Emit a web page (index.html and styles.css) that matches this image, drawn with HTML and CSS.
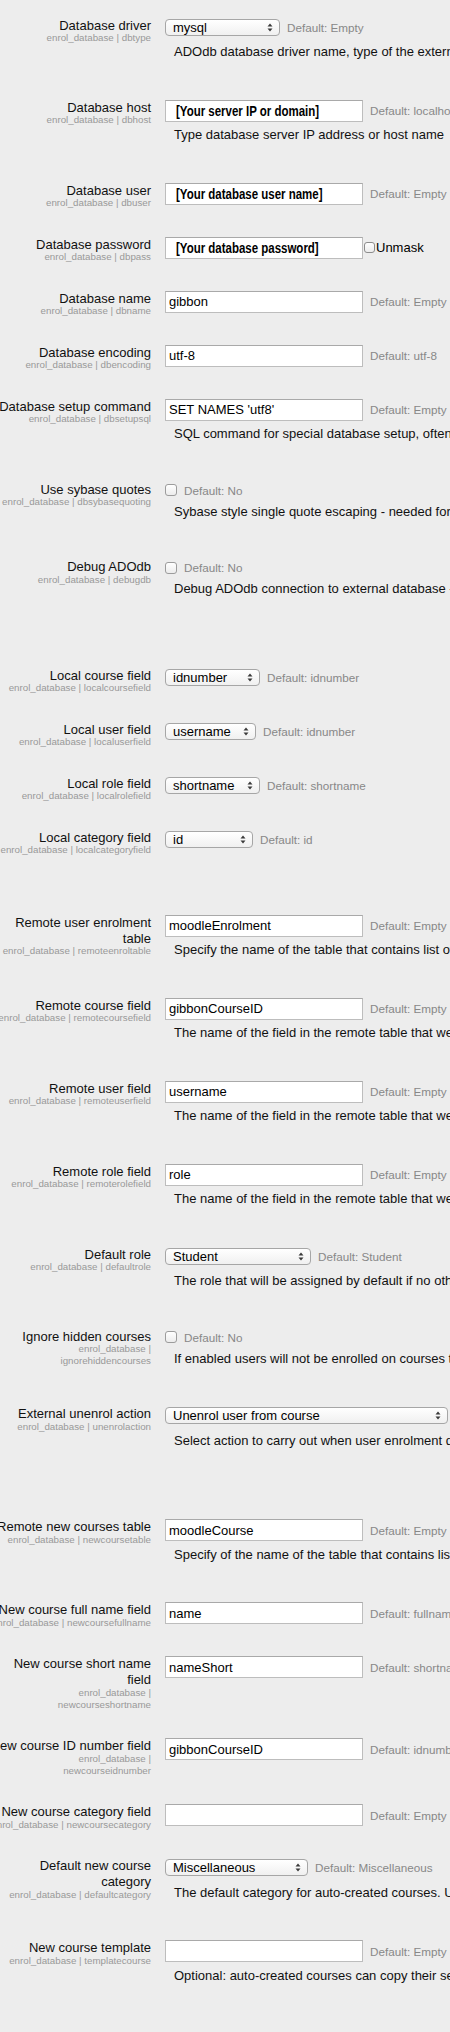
FILE: index.html
```html
<!DOCTYPE html>
<html lang="en">
<head>
<meta charset="utf-8">
<title>enrol_database settings</title>
<link rel="stylesheet" href="styles.css">
</head>
<body>
<div class="page">

  <div class="item">
    <div class="label"><label>Database driver</label><span class="name">enrol_database | dbtype</span></div>
    <div class="setting">
      <div class="control c-select"><div class="select w115"><span>mysql</span><svg class="arrows" width="6" height="9" viewBox="0 0 6 9"><polygon points="0.5,3.5 3,0.5 5.5,3.5"/><polygon points="0.5,5.5 3,8.5 5.5,5.5"/></svg></div><span class="default">Default: Empty</span></div>
      <p class="desc">ADOdb database driver name, type of the external database engine.</p>
    </div>
  </div>

  <div class="item">
    <div class="label"><label>Database host</label><span class="name">enrol_database | dbhost</span></div>
    <div class="setting">
      <div class="control c-input"><div class="field"><input class="text" type="text" value="" aria-label="Database host"><span class="redacted">[Your server IP or domain]</span></div><span class="default">Default: localhost</span></div>
      <p class="desc">Type database server IP address or host name</p>
    </div>
  </div>

  <div class="item">
    <div class="label"><label>Database user</label><span class="name">enrol_database | dbuser</span></div>
    <div class="setting">
      <div class="control c-input"><div class="field"><input class="text" type="text" value="" aria-label="Database user"><span class="redacted">[Your database user name]</span></div><span class="default">Default: Empty</span></div>
    </div>
  </div>

  <div class="item">
    <div class="label"><label>Database password</label><span class="name">enrol_database | dbpass</span></div>
    <div class="setting">
      <div class="control c-input tight"><div class="field"><input class="text" type="text" value="" aria-label="Database password"><span class="redacted">[Your database password]</span></div><label class="unmask"><input class="cb small" type="checkbox">Unmask</label></div>
    </div>
  </div>

  <div class="item">
    <div class="label"><label>Database name</label><span class="name">enrol_database | dbname</span></div>
    <div class="setting">
      <div class="control c-input"><input class="text" type="text" value="gibbon"><span class="default">Default: Empty</span></div>
    </div>
  </div>

  <div class="item">
    <div class="label"><label>Database encoding</label><span class="name">enrol_database | dbencoding</span></div>
    <div class="setting">
      <div class="control c-input"><input class="text" type="text" value="utf-8"><span class="default">Default: utf-8</span></div>
    </div>
  </div>

  <div class="item">
    <div class="label"><label>Database setup command</label><span class="name">enrol_database | dbsetupsql</span></div>
    <div class="setting">
      <div class="control c-input"><input class="text" type="text" value="SET NAMES 'utf8'"><span class="default">Default: Empty</span></div>
      <p class="desc">SQL command for special database setup, often used to setup communication encoding - example for MySQL and PostgreSQL: SET NAMES 'utf8'</p>
    </div>
  </div>

  <div class="item">
    <div class="label"><label>Use sybase quotes</label><span class="name">enrol_database | dbsybasequoting</span></div>
    <div class="setting">
      <div class="control c-check"><input class="cb" type="checkbox"><span class="default">Default: No</span></div>
      <p class="desc">Sybase style single quote escaping - needed for Oracle, MS SQL and some other databases. Do not use for MySQL!</p>
    </div>
  </div>

  <div class="item">
    <div class="label"><label>Debug ADOdb</label><span class="name">enrol_database | debugdb</span></div>
    <div class="setting">
      <div class="control c-check"><input class="cb" type="checkbox"><span class="default">Default: No</span></div>
      <p class="desc">Debug ADOdb connection to external database - use when getting empty page during login. Not suitable for production sites!</p>
    </div>
  </div>

  <div class="gap"></div>

  <div class="item">
    <div class="label"><label>Local course field</label><span class="name">enrol_database | localcoursefield</span></div>
    <div class="setting">
      <div class="control c-select"><div class="select w95"><span>idnumber</span><svg class="arrows" width="6" height="9" viewBox="0 0 6 9"><polygon points="0.5,3.5 3,0.5 5.5,3.5"/><polygon points="0.5,5.5 3,8.5 5.5,5.5"/></svg></div><span class="default">Default: idnumber</span></div>
    </div>
  </div>

  <div class="item">
    <div class="label"><label>Local user field</label><span class="name">enrol_database | localuserfield</span></div>
    <div class="setting">
      <div class="control c-select"><div class="select w91"><span>username</span><svg class="arrows" width="6" height="9" viewBox="0 0 6 9"><polygon points="0.5,3.5 3,0.5 5.5,3.5"/><polygon points="0.5,5.5 3,8.5 5.5,5.5"/></svg></div><span class="default">Default: idnumber</span></div>
    </div>
  </div>

  <div class="item">
    <div class="label"><label>Local role field</label><span class="name">enrol_database | localrolefield</span></div>
    <div class="setting">
      <div class="control c-select"><div class="select w95"><span>shortname</span><svg class="arrows" width="6" height="9" viewBox="0 0 6 9"><polygon points="0.5,3.5 3,0.5 5.5,3.5"/><polygon points="0.5,5.5 3,8.5 5.5,5.5"/></svg></div><span class="default">Default: shortname</span></div>
    </div>
  </div>

  <div class="item">
    <div class="label"><label>Local category field</label><span class="name">enrol_database | localcategoryfield</span></div>
    <div class="setting">
      <div class="control c-select"><div class="select w88"><span>id</span><svg class="arrows" width="6" height="9" viewBox="0 0 6 9"><polygon points="0.5,3.5 3,0.5 5.5,3.5"/><polygon points="0.5,5.5 3,8.5 5.5,5.5"/></svg></div><span class="default">Default: id</span></div>
    </div>
  </div>

  <div class="gap"></div>

  <div class="item">
    <div class="label"><label>Remote user enrolment table</label><span class="name">enrol_database | remoteenroltable</span></div>
    <div class="setting">
      <div class="control c-input"><input class="text" type="text" value="moodleEnrolment"><span class="default">Default: Empty</span></div>
      <p class="desc">Specify the name of the table that contains list of user enrolments. Empty means no user enrolment sync.</p>
    </div>
  </div>

  <div class="item">
    <div class="label"><label>Remote course field</label><span class="name">enrol_database | remotecoursefield</span></div>
    <div class="setting">
      <div class="control c-input"><input class="text" type="text" value="gibbonCourseID"><span class="default">Default: Empty</span></div>
      <p class="desc">The name of the field in the remote table that we are using to match entries in the course table.</p>
    </div>
  </div>

  <div class="item">
    <div class="label"><label>Remote user field</label><span class="name">enrol_database | remoteuserfield</span></div>
    <div class="setting">
      <div class="control c-input"><input class="text" type="text" value="username"><span class="default">Default: Empty</span></div>
      <p class="desc">The name of the field in the remote table that we are using to match entries in the user table.</p>
    </div>
  </div>

  <div class="item">
    <div class="label"><label>Remote role field</label><span class="name">enrol_database | remoterolefield</span></div>
    <div class="setting">
      <div class="control c-input"><input class="text" type="text" value="role"><span class="default">Default: Empty</span></div>
      <p class="desc">The name of the field in the remote table that we are using to match entries in the roles table.</p>
    </div>
  </div>

  <div class="item">
    <div class="label"><label>Default role</label><span class="name">enrol_database | defaultrole</span></div>
    <div class="setting">
      <div class="control c-select"><div class="select w146"><span>Student</span><svg class="arrows" width="6" height="9" viewBox="0 0 6 9"><polygon points="0.5,3.5 3,0.5 5.5,3.5"/><polygon points="0.5,5.5 3,8.5 5.5,5.5"/></svg></div><span class="default">Default: Student</span></div>
      <p class="desc">The role that will be assigned by default if no other role is specified in external table.</p>
    </div>
  </div>

  <div class="item">
    <div class="label"><label>Ignore hidden courses</label><span class="name">enrol_database | ignorehiddencourses</span></div>
    <div class="setting">
      <div class="control c-check"><input class="cb" type="checkbox"><span class="default">Default: No</span></div>
      <p class="desc">If enabled users will not be enrolled on courses that are set to be unavailable to students.</p>
    </div>
  </div>

  <div class="item">
    <div class="label"><label>External unenrol action</label><span class="name">enrol_database | unenrolaction</span></div>
    <div class="setting">
      <div class="control c-select"><div class="select w283"><span>Unenrol user from course</span><svg class="arrows" width="6" height="9" viewBox="0 0 6 9"><polygon points="0.5,3.5 3,0.5 5.5,3.5"/><polygon points="0.5,5.5 3,8.5 5.5,5.5"/></svg></div><span class="default">Default: Unenrol user from course</span></div>
      <p class="desc">Select action to carry out when user enrolment disappears from external data source. Please note that some user data and settings are purged from course during course unenrolment.</p>
    </div>
  </div>

  <div class="gap"></div>

  <div class="item">
    <div class="label"><label>Remote new courses table</label><span class="name">enrol_database | newcoursetable</span></div>
    <div class="setting">
      <div class="control c-input"><input class="text" type="text" value="moodleCourse"><span class="default">Default: Empty</span></div>
      <p class="desc">Specify of the name of the table that contains list of courses that should be created automatically. Empty means no courses are created.</p>
    </div>
  </div>

  <div class="item">
    <div class="label"><label>New course full name field</label><span class="name">enrol_database | newcoursefullname</span></div>
    <div class="setting">
      <div class="control c-input"><input class="text" type="text" value="name"><span class="default">Default: fullname</span></div>
    </div>
  </div>

  <div class="item">
    <div class="label"><label>New course short name field</label><span class="name">enrol_database | newcourseshortname</span></div>
    <div class="setting">
      <div class="control c-input"><input class="text" type="text" value="nameShort"><span class="default">Default: shortname</span></div>
    </div>
  </div>

  <div class="item">
    <div class="label"><label>New course ID number field</label><span class="name">enrol_database | newcourseidnumber</span></div>
    <div class="setting">
      <div class="control c-input"><input class="text" type="text" value="gibbonCourseID"><span class="default">Default: idnumber</span></div>
    </div>
  </div>

  <div class="item">
    <div class="label"><label>New course category field</label><span class="name">enrol_database | newcoursecategory</span></div>
    <div class="setting">
      <div class="control c-input"><input class="text" type="text" value=""><span class="default">Default: Empty</span></div>
    </div>
  </div>

  <div class="item">
    <div class="label"><label>Default new course category</label><span class="name">enrol_database | defaultcategory</span></div>
    <div class="setting">
      <div class="control c-select"><div class="select w143"><span>Miscellaneous</span><svg class="arrows" width="6" height="9" viewBox="0 0 6 9"><polygon points="0.5,3.5 3,0.5 5.5,3.5"/><polygon points="0.5,5.5 3,8.5 5.5,5.5"/></svg></div><span class="default">Default: Miscellaneous</span></div>
      <p class="desc">The default category for auto-created courses. Used when no new category id specified or not found.</p>
    </div>
  </div>

  <div class="item">
    <div class="label"><label>New course template</label><span class="name">enrol_database | templatecourse</span></div>
    <div class="setting">
      <div class="control c-input"><input class="text" type="text" value=""><span class="default">Default: Empty</span></div>
      <p class="desc">Optional: auto-created courses can copy their settings from a template course. Type here the shortname of the template course.</p>
    </div>
  </div>

</div>
</body>
</html>
```

FILE: styles.css
```css
* { box-sizing: border-box; }

html, body {
  margin: 0;
  padding: 0;
  background: #ededed;
  overflow: hidden;
}

body {
  font-family: "Liberation Sans", Arial, Helvetica, sans-serif;
  font-size: 13px;
  font-weight: normal;
  color: #000;
}

.page {
  margin-left: -11px;
  padding-top: 17.5px;
}

.item {
  display: grid;
  grid-template-columns: 162px minmax(0, 1fr);
  column-gap: 14px;
  margin-bottom: 26.5px;
}

.label {
  text-align: right;
  padding-bottom: 1px;
}

.label label {
  display: block;
  font-size: 13px;
  font-weight: normal;
  line-height: 16px;
  color: #111;
}

.label .name {
  display: block;
  font-size: 9.75px;
  line-height: 12px;
  color: #999;
  margin-top: -1.5px;
}

.control {
  display: flex;
  align-items: center;
  gap: 7px;
  white-space: nowrap;
}

.control.tight { gap: 1px; }

.c-input { margin-bottom: 5.5px; }
.c-select { margin-top: 1px; margin-bottom: 8.5px; }
.c-check { margin-top: 2px; margin-bottom: 7px; }

.default {
  font-size: 11.7px;
  color: #888;
}

.desc {
  margin: 0 0 13px;
  padding-left: 9px;
  line-height: 16px;
  white-space: nowrap;
  color: #111;
}

.text {
  flex: none;
  display: block;
  width: 198px;
  height: 22px;
  margin: 0;
  padding: 0 0 0 3px;
  border: 1px solid #bdbdbd;
  border-top-color: #a9a9a9;
  background: #fff;
  font-family: "Liberation Sans", Arial, sans-serif;
  font-size: 13px;
  color: #000;
  outline: none;
}

/* input with a redaction label laid over it */
.field {
  position: relative;
  flex: none;
}

.redacted {
  position: absolute;
  left: 11px;
  top: 3px;
  font-family: "Liberation Sans", Arial, sans-serif;
  font-weight: bold;
  font-size: 14px;
  line-height: 16px;
  color: #000;
  white-space: nowrap;
  transform: scaleX(0.82);
  transform-origin: left center;
  pointer-events: none;
}

.select {
  flex: none;
  display: flex;
  align-items: center;
  justify-content: space-between;
  height: 17px;
  padding: 0 6px 0 7px;
  border: 1px solid #a6a6a6;
  border-radius: 4px;
  background: linear-gradient(#ffffff, #f0f0f0);
  font-size: 13px;
  color: #000;
  line-height: 15px;
}

.select .arrows { display: block; fill: #3a3a3a; }

.w88 { width: 88px; }
.w91 { width: 91px; }
.w95 { width: 95px; }
.w115 { width: 115px; }
.w143 { width: 143px; }
.w146 { width: 146px; }
.w283 { width: 283px; }

.cb {
  -webkit-appearance: none;
  appearance: none;
  flex: none;
  width: 12px;
  height: 12px;
  margin: 0;
  border: 1px solid #9c9c9c;
  border-radius: 3px;
  background: linear-gradient(#ffffff, #ececec);
}

.cb.small {
  width: 11px;
  height: 11px;
  border-color: #8d8d8d;
  margin-right: 1px;
}

.unmask {
  display: flex;
  align-items: center;
  font-size: 13px;
  color: #000;
}

.gap { height: 31px; }
```
